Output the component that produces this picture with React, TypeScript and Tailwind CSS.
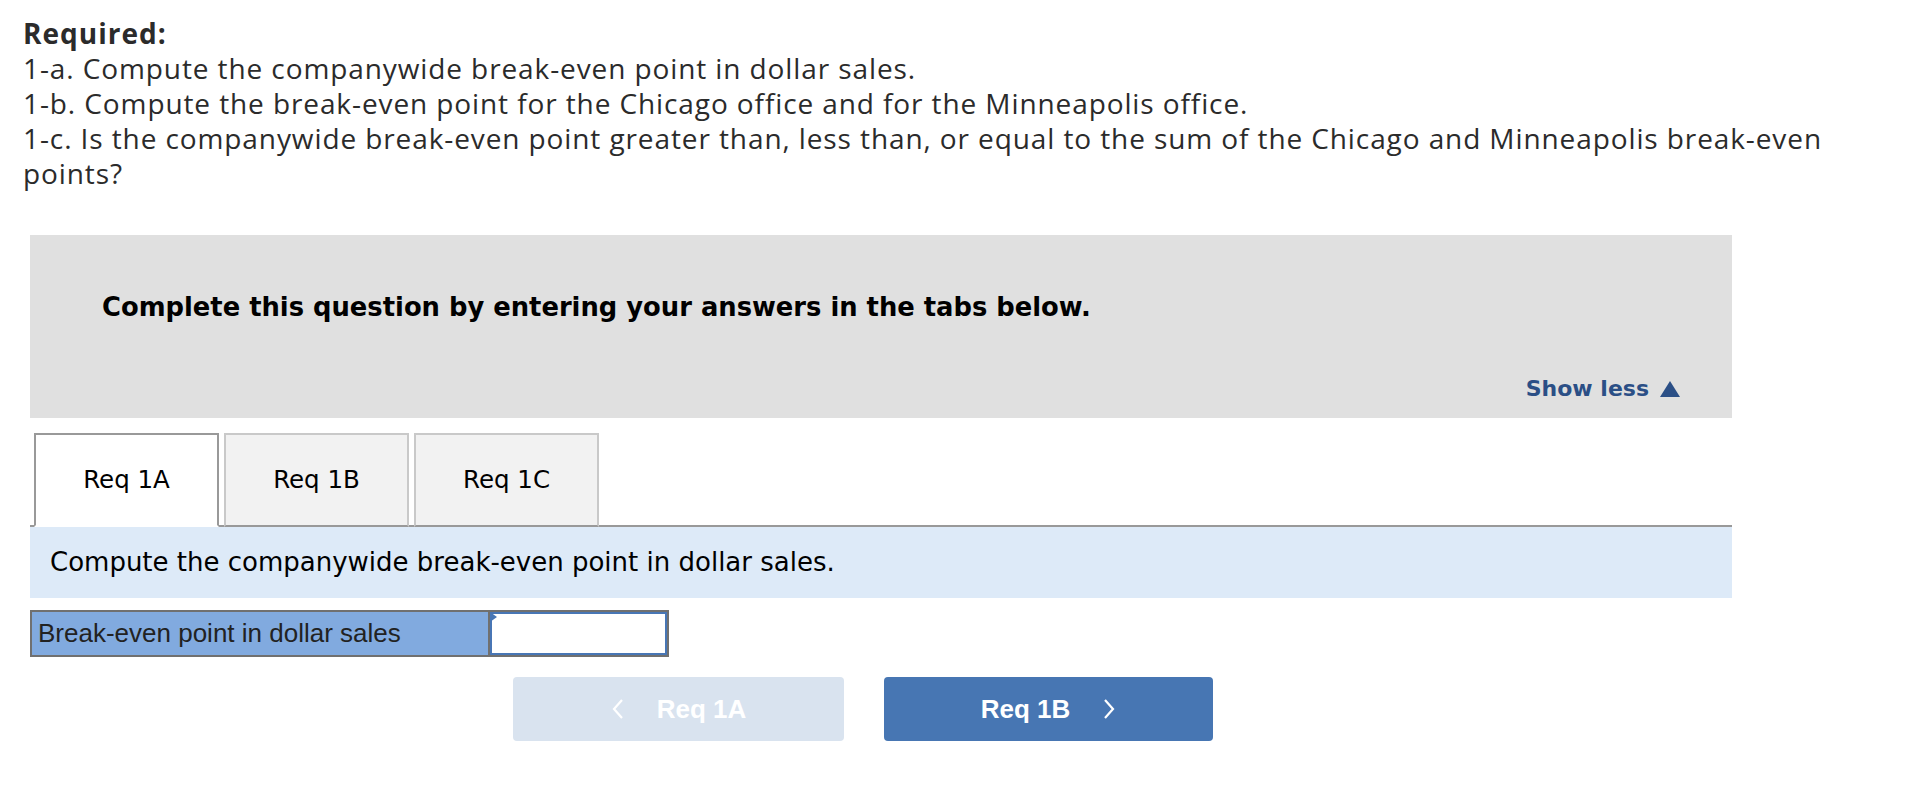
const tabs = ["Req 1A", "Req 1B", "Req 1C"];

function Chevron({ dir }: { dir: "left" | "right" }) {
    return (
        <svg width="14" height="22" viewBox="0 0 14 22" fill="none" stroke="currentColor" strokeWidth="2.2">
            {dir === "left" ? <polyline points="11,2 3,11 11,20" /> : <polyline points="3,2 11,11 3,20" />}
        </svg>
    );
}

function App() {
    const active = 0;

    return (
        <div className="min-h-screen bg-white pt-[16px]">
            {/* Question text */}
            <div className="pl-[23px] text-[28px] leading-[35px] tracking-[0.9px] text-[#2b2b2b] font-['Open_Sans',sans-serif] w-[1850px]">
                <p className="font-bold tracking-[1px]">Required:</p>
                <p>1-a. Compute the companywide break-even point in dollar sales.</p>
                <p>1-b. Compute the break-even point for the Chicago office and for the Minneapolis office.</p>
                <p>
                    1-c. Is the companywide break-even point greater than, less than, or equal to the sum of the
                    Chicago and Minneapolis break-even points?
                </p>
            </div>

            <div className="ml-[30px] w-[1702px] mt-[44px]">
                {/* Instructions panel */}
                <div className="bg-[#e0e0e0] h-[183px] flex flex-col justify-between pt-[57px] pb-[13px] px-[72px] font-['DejaVu_Sans',sans-serif]">
                    <p className="text-[25.8px] leading-[30px] font-bold text-black">
                        Complete this question by entering your answers in the tabs below.
                    </p>
                    <button className="self-end -mr-[20px] flex items-center gap-[11px] text-[22px] font-bold text-[#2b4f86]">
                        Show less
                        <span className="w-0 h-0 border-l-[10px] border-r-[10px] border-b-[16px] border-l-transparent border-r-transparent border-b-[#2b4f86]"></span>
                    </button>
                </div>

                {/* Tabs */}
                <div className="mt-[15px] flex gap-[5px] pl-[4px] border-b-2 border-[#999] font-['DejaVu_Sans',sans-serif]">
                    {tabs.map((t, i) => (
                        <button
                            key={t}
                            className={`w-[185px] h-[94px] -mb-[2px] text-[24.5px] text-black border-2 ${
                                i === active
                                    ? "bg-white border-[#999] border-b-white"
                                    : "bg-[#f2f2f2] border-[#c9c9c9] border-b-[#999]"
                            }`}
                        >
                            {t}
                        </button>
                    ))}
                </div>

                <div className="bg-[#ddeaf8] h-[71px] flex items-center px-[20px] font-['DejaVu_Sans',sans-serif] text-[26px] text-black">
                    Compute the companywide break-even point in dollar sales.
                </div>

                {/* Answer table */}
                <div className="mt-[12px] flex w-[639px] h-[47px] border-2 border-[#707070] font-['Liberation_Sans',sans-serif]">
                    <div className="w-[458px] bg-[#81aadf] border-r-2 border-[#707070] flex items-center pl-[6px] text-[26px] text-[#222]">
                        Break-even point in dollar sales
                    </div>
                    <div className="relative flex-1 bg-white border-2 border-[#4876b5]">
                        <span className="absolute -left-[2px] -top-[2px] w-0 h-0 border-t-[5px] border-b-[5px] border-l-[7px] border-t-transparent border-b-transparent border-l-[#4876b5]"></span>
                        <input type="text" className="w-full h-full outline-none px-2" />
                    </div>
                </div>

                {/* Navigation buttons */}
                <div className="mt-[20px] flex gap-[40px] pl-[483px] font-['Liberation_Sans',sans-serif]">
                    <button className="w-[331px] h-[64px] rounded-[4px] bg-[#d9e3ef] text-white text-[26px] font-bold flex items-center justify-center gap-[32px]">
                        <Chevron dir="left" />
                        Req 1A
                    </button>
                    <button className="w-[329px] h-[64px] rounded-[4px] bg-[#4776b3] text-white text-[26px] font-bold flex items-center justify-center gap-[32px]">
                        Req 1B
                        <Chevron dir="right" />
                    </button>
                </div>
            </div>
        </div>
    );
}

export default App;
